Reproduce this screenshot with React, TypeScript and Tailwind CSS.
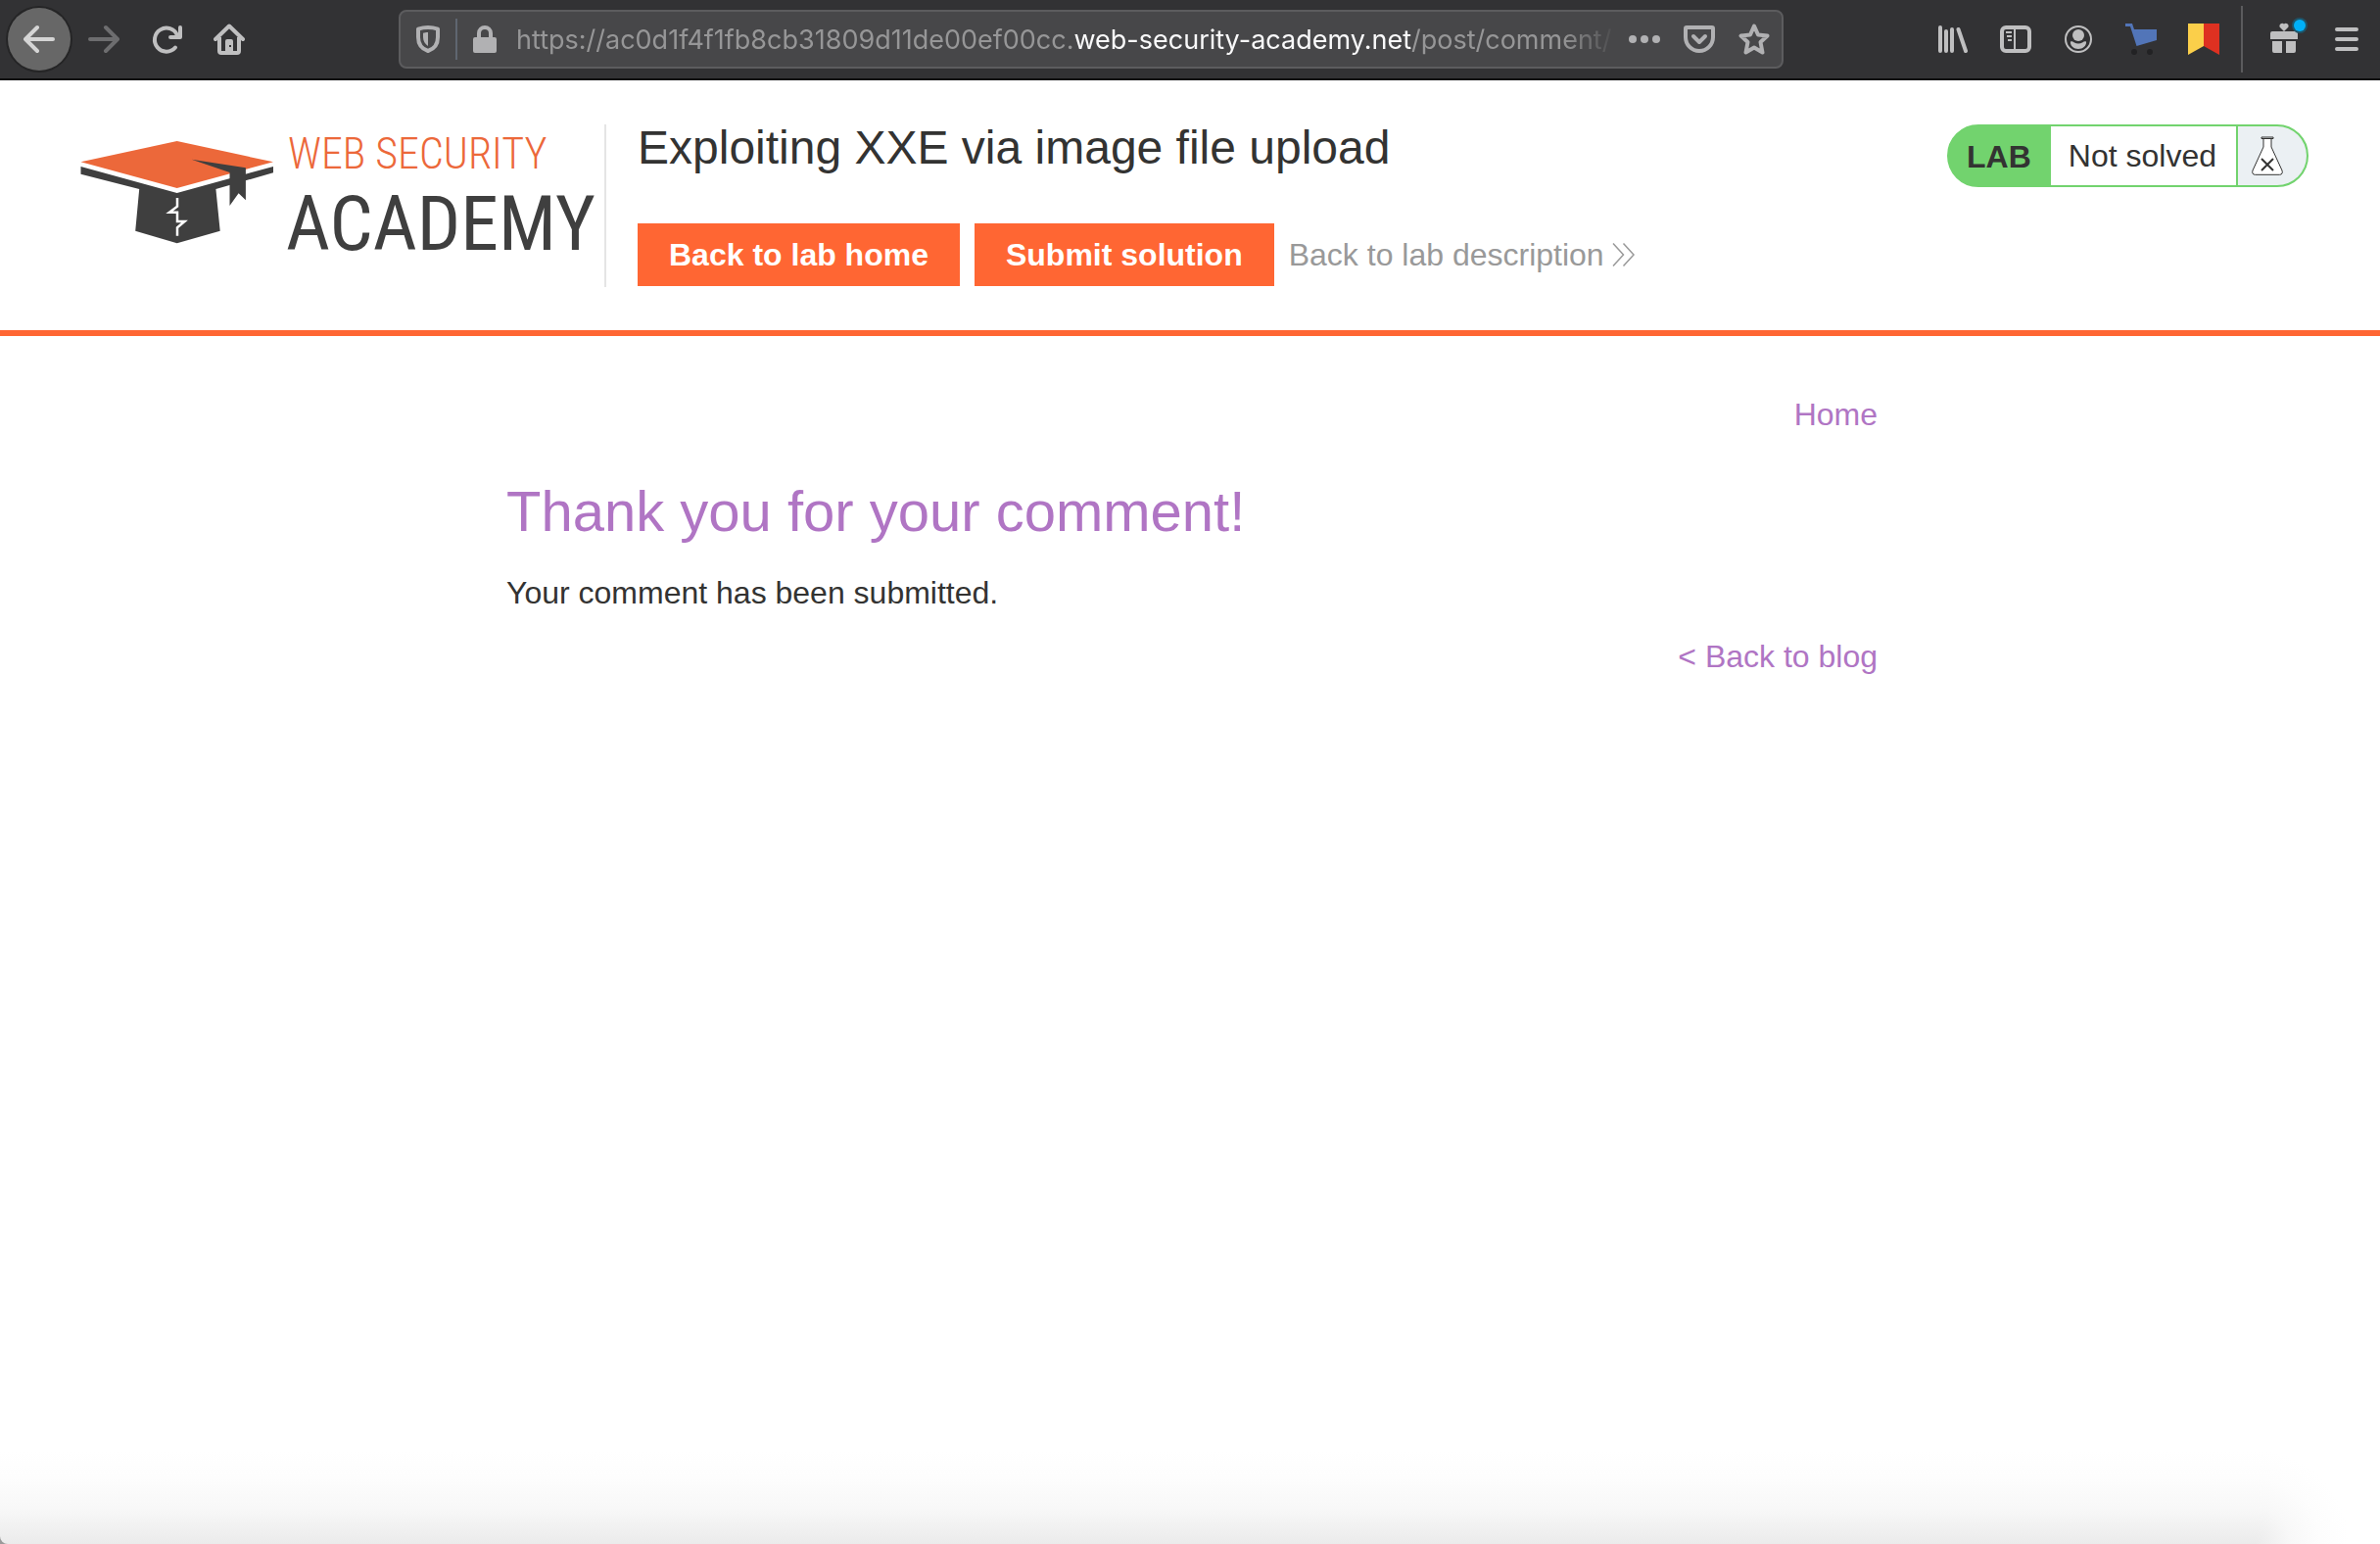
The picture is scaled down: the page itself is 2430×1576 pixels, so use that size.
import type { ReactNode } from "react";

function ToolButton({ label, children }: { label: string; children: ReactNode }) {
  return (
    <button type="button" aria-label={label} className="flex h-16 w-16 shrink-0 items-center justify-center text-[#bfbfc0]">
      {children}
    </button>
  );
}

function BrowserToolbar() {
  return (
    <div className="flex h-[82px] items-center border-b-2 border-[#0c0c0d] bg-[#323234] pl-2 pr-0.5">
      <button
        type="button"
        aria-label="Back"
        className="mr-0.5 flex h-16 w-16 shrink-0 items-center justify-center rounded-full bg-[#676767] text-[#d5d5d5] ring-2 ring-[#252526]"
      >
        <svg width="32" height="32" viewBox="0 0 32 32" fill="none" stroke="currentColor" strokeWidth="4" strokeLinecap="round" strokeLinejoin="round">
          <path d="M30 16H3M14 4L2 16l12 12" />
        </svg>
      </button>
      <button type="button" aria-label="Forward" disabled className="flex h-16 w-16 shrink-0 items-center justify-center text-[#6d6d6f]">
        <svg width="32" height="32" viewBox="0 0 32 32" fill="none" stroke="currentColor" strokeWidth="4" strokeLinecap="round" strokeLinejoin="round">
          <path d="M2 16h27M18 4l12 12-12 12" />
        </svg>
      </button>
      <ToolButton label="Reload">
        <svg width="32" height="32" viewBox="0 0 32 32" fill="none" stroke="currentColor" strokeWidth="4" strokeLinecap="round" strokeLinejoin="round">
          <path d="M25 24.500A12 12 0 1 1 27 12M30 4v10H20" />
        </svg>
      </ToolButton>
      <ToolButton label="Home">
        <svg width="32" height="32" viewBox="0 0 32 32" fill="none">
          <path d="M2 16L16 2.500 30 16" stroke="currentColor" strokeWidth="4" strokeLinecap="round" strokeLinejoin="round" />
          <path d="M6 14v14a2 2 0 0 0 2 2h16a2 2 0 0 0 2-2V14" stroke="currentColor" strokeWidth="4" />
          <path d="M12 30V18a2 2 0 0 1 2-2h4a2 2 0 0 1 2 2v12z" fill="currentColor" />
          <rect x="16" y="22" width="2" height="2" fill="#323234" />
        </svg>
      </ToolButton>

      <div className="ml-[141px] mr-[141px] flex h-15 min-w-0 flex-1 items-center rounded-lg border-2 border-[#5c5c5e] bg-[#474749] text-[#b1b1b3]">
        <button type="button" aria-label="Tracking protection" className="flex h-full w-14 shrink-0 items-center justify-center">
          <svg width="24" height="28" viewBox="0 0 24 28">
            <path d="M12 2c4 0 7 .6 10 1.600V12c0 7-4 12-10 14C6 24 2 19 2 12V3.600C5 2.600 8 2 12 2z" fill="none" stroke="currentColor" strokeWidth="4" strokeLinejoin="round" />
            <path d="M12 7c-2 0-3.500.2-5 .7V12c0 4 2 7 5 9z" fill="currentColor" />
          </svg>
        </button>
        <span className="h-[42px] w-0.5 shrink-0 bg-[#5f6670]" />
        <button type="button" aria-label="Connection secure" className="ml-4 flex shrink-0 items-center">
          <svg width="24" height="28" viewBox="0 0 24 28">
            <rect x="0" y="12" width="24" height="16" rx="2" fill="currentColor" />
            <path d="M6 13V8a6 6 0 0 1 12 0v5" fill="none" stroke="currentColor" strokeWidth="4" />
          </svg>
        </button>
        <a
          href="#address"
          className="ml-5 min-w-0 flex-1 overflow-hidden whitespace-nowrap pt-0.5 font-['Inter',sans-serif] text-[27px] leading-9 text-[#969697] [mask-image:linear-gradient(to_right,black_calc(100%-56px),transparent)]"
        >
          https://ac0d1f4f1fb8cb31809d11de00ef00cc.<span className="text-[#f9f9fa]">web-security-academy.net</span>/post/comment/
        </a>
        <button type="button" aria-label="Page actions" className="flex w-14 shrink-0 items-center justify-center">
          <svg width="32" height="8" viewBox="0 0 32 8" fill="currentColor">
            <circle cx="4" cy="4" r="4" />
            <circle cx="16" cy="4" r="4" />
            <circle cx="28" cy="4" r="4" />
          </svg>
        </button>
        <button type="button" aria-label="Save to Pocket" className="flex w-14 shrink-0 items-center justify-center">
          <svg width="32" height="28" viewBox="0 0 32 28" fill="none" stroke="currentColor" strokeWidth="4" strokeLinecap="round" strokeLinejoin="round">
            <path d="M3 2h26a1 1 0 0 1 1 1v9a14 14 0 0 1-28 0V3a1 1 0 0 1 1-1z" />
            <path d="M10 11l6 6 6-6" />
          </svg>
        </button>
        <button type="button" aria-label="Bookmark this page" className="flex w-14 shrink-0 items-center justify-center">
          <svg width="32" height="32" viewBox="0 0 32 32" fill="none" stroke="currentColor" strokeWidth="4" strokeLinejoin="round">
            <path d="M16 2.500l4 9 9.500 1-7 6.500 2 10.500L16 24.500 7.500 29.500l2-10.500-7-6.500 9.500-1z" />
          </svg>
        </button>
      </div>

      <ToolButton label="Library">
        <svg width="32" height="28" viewBox="0 0 32 28" stroke="currentColor" strokeWidth="4" strokeLinecap="round">
          <path d="M3 2v24M9 6v20M15 4v22M21.500 4l7.500 22" />
        </svg>
      </ToolButton>
      <ToolButton label="Sidebars">
        <svg width="32" height="28" viewBox="0 0 32 28" fill="none" stroke="currentColor">
          <rect x="2" y="2" width="28" height="24" rx="4" strokeWidth="4" />
          <path d="M15 3v22" strokeWidth="2" />
          <path d="M6 7h6M7 11h5M8 15h4" strokeWidth="2" />
        </svg>
      </ToolButton>
      <ToolButton label="Account">
        <svg width="28" height="28" viewBox="0 0 28 28">
          <circle cx="14" cy="14" r="13" fill="none" stroke="currentColor" strokeWidth="2" />
          <circle cx="14" cy="10" r="6" fill="currentColor" />
          <path d="M6 16.500c1.500-.8 2.500 0 3.500.7 3 1.600 6 1.600 9 0 1-.7 2-1.500 3.500-.7.700 4-3.500 7.500-8 7.500s-8.700-3.500-8-7.500z" fill="currentColor" />
        </svg>
      </ToolButton>
      <ToolButton label="Shopping assistant">
        <svg width="32" height="32" viewBox="0 0 32 32">
          <path d="M0 0h7l2 6h23v11l-20.500 6L5 3H0z" fill="#5275b8" />
          <circle cx="9" cy="29" r="3" fill="#222224" />
          <circle cx="25" cy="29" r="3" fill="#222224" />
        </svg>
      </ToolButton>
      <ToolButton label="Bookmark extension">
        <svg width="32" height="32" viewBox="0 0 32 32">
          <path d="M0 0h16v23L0 32z" fill="#fbcf4a" />
          <path d="M16 0h16v32l-16-9z" fill="#de3121" />
        </svg>
      </ToolButton>
      <span className="ml-1.5 mr-2.5 h-[68px] w-0.5 shrink-0 bg-[#5b5b5d]" />
      <ToolButton label="What's new">
        <svg width="40" height="44" viewBox="0 0 40 44" className="ml-3">
          <path d="M2 14h10v8H0v-6a2 2 0 0 1 2-2zM12 14h14a2 2 0 0 1 2 2v6H12zM2 24h10v12H4a2 2 0 0 1-2-2zM16 24h10v10a2 2 0 0 1-2 2h-8z" fill="currentColor" />
          <path d="M14 14L9.500 9.500a2.800 2.800 0 0 1 4.500-3 2.800 2.800 0 0 1 4.500 3z" fill="currentColor" />
          <circle cx="30" cy="8" r="8" fill="#1f5468" />
          <circle cx="30" cy="8" r="6" fill="#00b0f8" />
        </svg>
      </ToolButton>
      <ToolButton label="Menu">
        <svg width="24" height="24" viewBox="0 0 24 24" stroke="currentColor" strokeWidth="4" strokeLinecap="round">
          <path d="M2 2h20M2 12h20M2 22h20" />
        </svg>
      </ToolButton>
    </div>
  );
}

function AcademyLogo() {
  return (
    <a href="#academy" className="flex shrink-0 items-start gap-3">
      <svg width="198" height="106" viewBox="0 0 198 106" className="mt-[17px]" aria-hidden="true">
        <path d="M98.700 0L197 21.300 98.700 48 .5 21.300z" fill="#ec683a" />
        <path d="M.5 26v7.700L60.200 49l-4 42.700 42.500 12.600 44-12.600-4.300-42.700L197 32.300V26L98.700 53z" fill="#3f3f3f" />
        <path d="M113.600 18.700l55.300 8.600v33l-7.300-7-9.100 12.700V32z" fill="#3f3f3f" />
        <path d="M99 58v8.700l-8 6h8V82h7.500L99 88.300v8.400" fill="none" stroke="#fff" strokeWidth="2.500" />
      </svg>
      <span className="flex flex-col font-['Roboto_Condensed','Roboto',sans-serif]">
        <span className="mt-1 pl-0.5 text-[44px] font-light leading-[52px] text-[#ec683a]">WEB SECURITY</span>
        <span className="text-[78px] leading-[92px] text-[#3f3f3f]">ACADEMY</span>
      </span>
    </a>
  );
}

function LabStatus() {
  return (
    <div className="flex h-16 shrink-0 overflow-hidden rounded-full border-2 border-[#72d36e] bg-[#72d36e]">
      <span className="flex items-center pl-[18px] pr-5 pt-0.5 font-bold">LAB</span>
      <span className="flex items-center bg-white pl-[18px] pr-5">Not solved</span>
      <span className="ml-0.5 flex w-[70px] items-center bg-[#ebf0f3] pl-3.5">
        <svg width="32" height="40" viewBox="0 0 32 40" fill="none" stroke="#333332" aria-hidden="true">
          <path d="M12 2v9L1 35c-.8 2.500 0 4.300 2.500 4.300h25c2.500 0 3.300-1.800 2.500-4.300L20 11V2" fill="#fff" />
          <path d="M10 1h12v1.500H10z" />
          <path d="M10 23l12 12M22 23L10 35" strokeWidth="2" />
        </svg>
      </span>
    </div>
  );
}

function LabHeader() {
  return (
    <header className="flex items-start border-b-[6px] border-[#ff6633] pb-11 pl-[82px] pr-[73px] pt-[45px]">
      <div className="flex h-[166px] w-[537px] shrink-0 border-r-2 border-[#e5e5e5]">
        <AcademyLogo />
      </div>
      <div className="ml-8 flex-1">
        <h2 className="text-5xl leading-12">Exploiting XXE via image file upload</h2>
        <div className="mt-[53px] flex items-center gap-[15px]">
          <a href="#lab-home" className="flex h-16 items-center bg-[#ff6633] px-8 font-bold text-white">
            Back to lab home
          </a>
          <button type="button" className="flex h-16 items-center bg-[#ff6633] px-8 font-bold text-white">
            Submit solution
          </button>
          <a href="#lab-description" className="flex items-center gap-2 text-[#999999]">
            Back to lab description
            <svg width="24" height="24" viewBox="0 0 24 24" fill="none" stroke="currentColor" strokeWidth="1.500" aria-hidden="true">
              <path d="M1 .5l10.500 11.500L1 23.500M11.500 .5L22 12 11.500 23.500" />
            </svg>
          </a>
        </div>
      </div>
      <LabStatus />
    </header>
  );
}

function BottomShade() {
  return (
    <div className="flex h-24">
      <div className="flex flex-1 bg-[#9a9a9a]">
        <div className="flex-1 rounded-bl-lg bg-[linear-gradient(to_top,#ebebeb,#f8f8f8_37px,#fdfdfd_67px,#ffffff_96px)]" />
      </div>
      <div className="w-32 bg-[radial-gradient(circle_at_bottom_left,#ebebeb,#f8f8f8_37px,#fdfdfd_67px,#ffffff_96px)]" />
    </div>
  );
}

export default function App() {
  return (
    <div className="flex min-h-screen flex-col bg-white font-['Liberation_Sans',Arial,sans-serif] text-[32px] leading-9 text-[#333332]">
      <BrowserToolbar />
      <LabHeader />
      <div className="flex-1 pl-1">
        <main className="mx-auto flex w-full max-w-[1400px] flex-col pt-[62px]">
          <nav className="flex justify-end">
            <a href="#home" className="text-[#b075c4]">Home</a>
          </nav>
          <h1 className="mt-12 text-[58px] leading-[66px] text-[#b075c4]">Thank you for your comment!</h1>
          <p className="mt-8">Your comment has been submitted.</p>
          <div className="mt-[29px] flex justify-end">
            <a href="#blog" className="text-[#b075c4]">&lt; Back to blog</a>
          </div>
        </main>
      </div>
      <BottomShade />
    </div>
  );
}
